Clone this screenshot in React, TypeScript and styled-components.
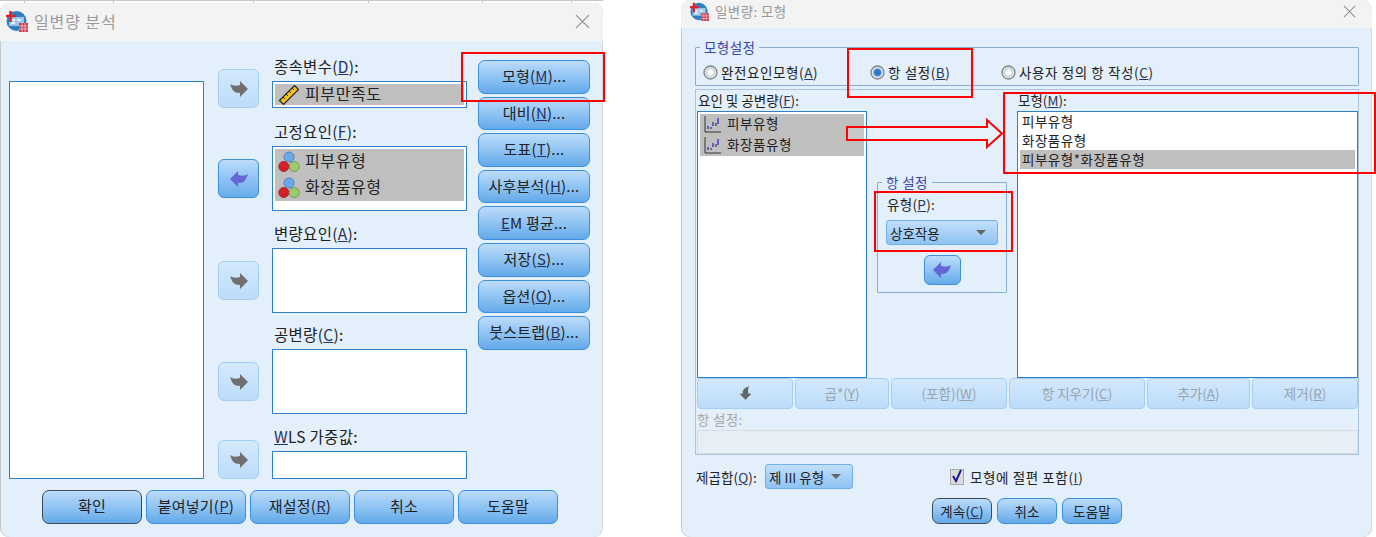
import React from "react";
import styled, { createGlobalStyle } from "styled-components";

const Global = createGlobalStyle`
  html, body { margin: 0; padding: 0; background: #fff; }
  body { font-family: "Noto Sans CJK KR", "Noto Sans", sans-serif; color: #222; }
`;

const Page = styled.div`
  position: relative; width: 1376px; height: 537px; overflow: hidden; background: #fff;
  display: flex; align-items: flex-start;
`;
const LeftStack = styled.div`display: flex; flex-direction: column; width: 603px; margin-right: 78px;`;
const SheetEdge = styled.div`height: 3px; display: flex; border-top: 1px solid #c8c8c8; box-sizing: border-box;`;
const SheetCell = styled.div<{ $w: number }>`width: ${p => p.$w}px; height: 2px; border-right: 1px solid #a9c4dc; box-sizing: border-box;`;

const Dialog = styled.div<{ $h: number; $w: number }>`
  width: ${p => p.$w}px; height: ${p => p.$h}px; box-sizing: border-box; background: #e3effb;
  border-radius: 9px; overflow: hidden; display: flex; flex-direction: column;
  box-shadow: inset 1px 0 0 #c9c9c9, inset -1px 0 0 #d8d8d8;
`;
const TitleBar = styled.div<{ $h: number; $size: number; $pad: number; $lift?: number }>`
  height: ${p => p.$h}px; flex: none; box-sizing: border-box; background: #f3f3f3; display: flex; align-items: center;
  padding: 0 ${p => p.$pad + 7}px ${p => p.$lift ?? 0}px ${p => p.$pad}px; gap: 6px; color: #9b9b9b; font-size: ${p => p.$size}px;
`;
const TitleText = styled.span<{ $track: number }>`flex: 1; letter-spacing: ${p => p.$track}px;`;

const Body1 = styled.div`padding: 16px 13px 0 9px; display: flex; flex-direction: column;`;
const MainRow = styled.div`display: flex; align-items: flex-start;`;
const SourceList = styled.div`
  width: 195px; height: 398px; margin-top: 24px; box-sizing: border-box; background: #fff;
  border: 1.5px solid #2f7fc9; flex: none;
`;
const Targets = styled.div`display: flex; flex-direction: column; width: 249px; margin: 0 11px 0 14px; flex: none;`;
const TargetRow = styled.div<{ $top: number }>`
  display: grid; grid-template-columns: 41px 195px; grid-template-rows: 24px auto; column-gap: 13px;
  margin-top: ${p => p.$top}px;
`;
const FieldLabel = styled.div`grid-column: 2; grid-row: 1; font-size: 15.5px; line-height: 19px; white-space: nowrap; padding-left: 2px; letter-spacing: 0.3px;`;
const Mn = styled.span`color: #28335f; text-decoration: underline; text-underline-offset: 1px;`;
const ArrowSlot = styled.div<{ $small?: boolean }>`
  grid-column: 1; grid-row: ${p => (p.$small ? "1 / 3" : "2")}; align-self: ${p => (p.$small ? "end" : "center")};
`;
const SlotBox = styled.div<{ $h: number }>`
  grid-column: 2; grid-row: 2; height: ${p => p.$h}px; box-sizing: border-box; background: #fff;
  border: 1.5px solid #2f7fc9; padding: 2px; overflow: hidden;
`;
const GreyRows = styled.div`background: #bfbfbf; display: flex; flex-direction: column;`;
const VarRow = styled.div<{ $h: number; $size: number }>`
  height: ${p => p.$h}px; display: flex; align-items: center; gap: 5px; padding-left: 3px; box-sizing: border-box;
  font-size: ${p => p.$size}px; white-space: nowrap; letter-spacing: 0.6px;
`;
const VarName = styled.span`padding-bottom: 4px;`;
const ArrowButton = styled.div<{ $active?: boolean; $w?: number; $h?: number }>`
  width: ${p => p.$w ?? 41}px; height: ${p => p.$h ?? 39}px; box-sizing: border-box; border-radius: 6px;
  display: flex; align-items: center; justify-content: center;
  border: 1.5px solid ${p => (p.$active ? "#3b8fdc" : "#a3cff6")};
  background: ${p => p.$active
    ? "linear-gradient(#bcdcfa, #8fc3f3 50%, #66abea)"
    : "linear-gradient(#d4e9fd, #bcdcfa)"};
`;
const ButtonCol = styled.div`display: flex; flex-direction: column; gap: 3px; width: 112px; margin-top: 3px; flex: none;`;
const Btn = styled.div<{ $h?: number; $default?: boolean; $size?: number }>`
  height: ${p => p.$h ?? 33.6}px; box-sizing: border-box; border-radius: 7px;
  border: 1.5px solid ${p => (p.$default ? "#3c4a5a" : "#3b8fdc")};
  background: linear-gradient(#bcdcfa, #90c4f3 50%, #63a9e9);
  display: flex; align-items: center; justify-content: center; white-space: nowrap;
  font-size: ${p => p.$size ?? 15}px; letter-spacing: 0.2px; padding-bottom: 2px;
`;
const Footer1 = styled.div`display: flex; gap: 4px; margin: 11px 0 0 33px;`;
const FooterBtn = styled(Btn)`width: 100px; padding-bottom: 4px;`;

const Body2 = styled.div`padding: 12px 13px 0 14px; display: flex; flex-direction: column; font-size: 13px;`;
const Group = styled.fieldset`
  margin: 0; padding: 0; box-sizing: border-box; border: 1px solid #88aed4; border-radius: 1px; min-width: 0;
`;
const GroupLegend = styled.legend<{ $shift: number }>`
  margin-left: ${p => p.$shift}px; padding: 0 4px; font-size: 13.5px; line-height: 14px; color: #3c45a8; letter-spacing: 0.4px;
`;
const ModelGroup = styled(Group)`
  height: 46px; display: flex; align-items: center; padding: 8px 0 0 7px;
`;
const Radio = styled.label<{ $w: number }>`
  width: ${p => p.$w}px; flex: none; display: flex; align-items: center; gap: 3px; font-size: 13.5px; white-space: nowrap; letter-spacing: 0.6px;
`;
const Panel = styled.div`
  margin-top: 3px; height: 366px; box-sizing: border-box; border: 1px solid #a8c4e0; display: flex; flex-direction: column; padding: 0 0 0 1px;
`;
const PanelTop = styled.div`display: grid; grid-template-columns: 170px 130px 341px; column-gap: 10px; height: 288px;`;
const ListColumn = styled.div`display: flex; flex-direction: column;`;
const ListLabel = styled.div`height: 21px; line-height: 21px; font-size: 13.5px; white-space: nowrap; padding-left: 1px;`;
const ListBox = styled.div`
  flex: 1; box-sizing: border-box; background: #fff; border: 1.5px solid #2f7fc9; padding: 2px; 
`;
const ModelListBox = styled(ListBox)`padding: 0 2px;`;
const ModelRow = styled.div<{ $sel?: boolean }>`
  height: 19px; line-height: 19px; font-size: 13.5px; padding-left: 2px; letter-spacing: 0.5px;
  background: ${p => (p.$sel ? "#bfbfbf" : "transparent")};
`;
const MidColumn = styled.div`padding-top: 85px;`;
const TermGroup = styled(Group)`height: 118px; padding: 0 8px; display: flex; flex-direction: column;`;
const TermLabel = styled.div`font-size: 13.5px; line-height: 18px; margin: 6px 0 7px 1px; letter-spacing: 0.3px;`;
const Select = styled.div<{ $w: number; $h: number }>`
  width: ${p => p.$w}px; height: ${p => p.$h}px; box-sizing: border-box; border-radius: 3px; border: 1px solid #6fb0ec;
  background: linear-gradient(#c1dffb, #8ec3f3); display: flex; align-items: center; justify-content: space-between;
  padding: 0 11px 0 3px; font-size: 13.5px; white-space: nowrap; flex: none;
`;
const Caret = styled.div`width: 0; height: 0; border-left: 5px solid transparent; border-right: 5px solid transparent; border-top: 5px solid #666;`;
const CenteredArrow = styled.div`display: flex; justify-content: center; margin-top: 10px;`;
const ToolRow = styled.div`
  display: grid; grid-template-columns: 96px 94px 116px 136px 103px 106px; column-gap: 2px; height: 31px;
`;
const ToolBtn = styled.div`
  box-sizing: border-box; border-radius: 4px; border: 1px solid #a3cff6; background: linear-gradient(#d3e8fd, #bcdcfa);
  display: flex; align-items: center; justify-content: center; color: #9aa3ab; font-size: 13.5px; white-space: nowrap; padding-bottom: 2px;
`;
const DimMn = styled.span`text-decoration: underline; text-underline-offset: 1px;`;
const TermCaption = styled.div`height: 21px; line-height: 21px; color: #a8a8a8; font-size: 13.5px; letter-spacing: 0.3px;`;
const TermInput = styled.div`height: 24px; box-sizing: border-box; background: #e8eef5; border: 1px solid #d9dde2;`;
const OptionRow = styled.div`display: flex; align-items: center; margin-top: 9px; font-size: 13.5px; white-space: nowrap;`;
const SumLabel = styled.div`width: 69px; flex: none; margin-left: 1px; letter-spacing: 0.1px;`;
const CheckWrap = styled.div`display: flex; align-items: center; gap: 6px; margin-left: 97px; letter-spacing: 0.6px;`;
const Actions2 = styled.div`display: flex; justify-content: center; gap: 5px; margin-top: 9px;`;
const ActionBtn = styled(Btn)`width: 60px; padding-bottom: 0;`;

const Mark = styled.div<{ $x: number; $y: number; $w: number; $h: number }>`
  position: absolute; left: ${p => p.$x}px; top: ${p => p.$y}px; width: ${p => p.$w}px; height: ${p => p.$h}px;
  box-sizing: border-box; border: 2px solid #f00; pointer-events: none;
`;
const BigArrow = styled.svg`position: absolute; left: 846px; top: 118px; pointer-events: none;`;

const ARROW = "M11 0 L19 8 L11 16 V12 C7 12 5 11 3 8 L1 3 C4 5 7 5 11 4 Z";
const Arrow = ({ dir = "right", color = "#6f6f6f", size = 20 }: { dir?: "right" | "left" | "down"; color?: string; size?: number }) => (
  <svg width={size} height={size * 0.8} viewBox="0 0 20 16"
    style={{ transform: dir === "left" ? "scaleX(-1)" : dir === "down" ? "rotate(90deg)" : undefined }}>
    <path d={ARROW} fill={color} />
  </svg>
);

const AppIcon = ({ size }: { size: number }) => (
  <svg width={size} height={size} viewBox="0 0 22 22">
    <circle cx="10.5" cy="11" r="10" fill="#2f7fc0" />
    <path d="M3 7h15v9H3z" fill="#9cc6e6" />
    <path d="M5 9h4v2H5zM11 9h4v2h-4zM5 12h4v2H5z" fill="#e8f2fa" />
    <path d="M0 6h10M4.5 1v11" stroke="#d8232f" strokeWidth="2.6" />
    <rect x="13" y="13" width="9" height="9" fill="#d23a4a" />
    <path d="M13 16h9M13 19h9M16 13v9M19 13v9" stroke="#f7c9cf" strokeWidth="0.8" />
  </svg>
);
const Close = ({ size }: { size: number }) => (
  <svg width={size} height={size} viewBox="0 0 14 14">
    <path d="M1 1l12 12M13 1L1 13" stroke="#8f8f8f" strokeWidth="1.1" />
  </svg>
);
const Ruler = () => (
  <svg width="22" height="22" viewBox="0 0 22 22">
    <path d="M1.5 16.5L16.5 1.5l4 4L5.5 20.5z" fill="#f6c21c" stroke="#222" strokeWidth="1.2" />
    <path d="M5 13l2 2M8 10l2 2M11 7l2 2M14 4l2 2" stroke="#222" strokeWidth="1" />
  </svg>
);
const Balls = () => (
  <svg width="22" height="22" viewBox="0 0 22 22">
    <circle cx="11" cy="6" r="5" fill="#6ea8e6" stroke="#3d78bd" strokeWidth="0.8" />
    <circle cx="5.8" cy="15.5" r="5" fill="#d5202c" stroke="#9a1620" strokeWidth="0.8" />
    <circle cx="16.2" cy="15.5" r="5" fill="#9ccb6c" stroke="#5f9a3c" strokeWidth="0.8" />
  </svg>
);
const Scale = () => (
  <svg width="19" height="19" viewBox="0 0 19 19">
    <path d="M2 1v16h16" fill="none" stroke="#333" strokeWidth="1" />
    <path d="M5 11v3M10 7v4M15 3v6" stroke="#3535d0" strokeWidth="1.4" />
    <path d="M8 12v2M13 8v3" stroke="#222" strokeWidth="1" />
  </svg>
);
const RadioMark = ({ on }: { on?: boolean }) => (
  <svg width="15" height="15" viewBox="0 0 15 15">
    <circle cx="7.5" cy="7.5" r="6.5" fill="#dfe6ec" stroke="#7d8489" strokeWidth="1.3" />
    <circle cx="7.5" cy="7.5" r="4" fill={on ? "#2b78cc" : "#fff"} stroke={on ? "#8fbde8" : "#b8c2ca"} />
  </svg>
);
const Check = () => (
  <svg width="14" height="17" viewBox="0 0 14 17">
    <rect x="0.5" y="1.5" width="13" height="15" fill="#dcdcdc" stroke="#aaa" />
    <path d="M3 8l3 5 5-11" fill="none" stroke="#1b1b9c" strokeWidth="2" />
  </svg>
);

export default function App() {
  return (
    <Page>
      <Global />
      <LeftStack>
        <SheetEdge>
          {[25, 89, 140, 115, 114, 89].map((w, i) => <SheetCell key={i} $w={w} />)}
        </SheetEdge>
        <Dialog $w={603} $h={534}>
          <TitleBar $h={38} $size={16} $pad={6} $lift={2}>
            <AppIcon size={22} />
            <TitleText $track={0.9}>일변량 분석</TitleText>
            <Close size={15} />
          </TitleBar>
          <Body1>
            <MainRow>
              <SourceList />
              <Targets>
                <TargetRow $top={0}>
                  <FieldLabel>종속변수(<Mn>D</Mn>):</FieldLabel>
                  <ArrowSlot $small><ArrowButton><Arrow /></ArrowButton></ArrowSlot>
                  <SlotBox $h={27}>
                    <GreyRows><VarRow $h={21} $size={16}><Ruler /><VarName>피부만족도</VarName></VarRow></GreyRows>
                  </SlotBox>
                </TargetRow>
                <TargetRow $top={14}>
                  <FieldLabel>고정요인(<Mn>F</Mn>):</FieldLabel>
                  <ArrowSlot><ArrowButton $active><Arrow dir="left" color="#6565d6" /></ArrowButton></ArrowSlot>
                  <SlotBox $h={65}>
                    <GreyRows>
                      <VarRow $h={26} $size={16}><Balls /><VarName>피부유형</VarName></VarRow>
                      <VarRow $h={26} $size={16}><Balls /><VarName>화장품유형</VarName></VarRow>
                    </GreyRows>
                  </SlotBox>
                </TargetRow>
                <TargetRow $top={13}>
                  <FieldLabel>변량요인(<Mn>A</Mn>):</FieldLabel>
                  <ArrowSlot><ArrowButton><Arrow /></ArrowButton></ArrowSlot>
                  <SlotBox $h={65} />
                </TargetRow>
                <TargetRow $top={12}>
                  <FieldLabel>공변량(<Mn>C</Mn>):</FieldLabel>
                  <ArrowSlot><ArrowButton><Arrow /></ArrowButton></ArrowSlot>
                  <SlotBox $h={65} />
                </TargetRow>
                <TargetRow $top={13}>
                  <FieldLabel><Mn>W</Mn>LS 가중값:</FieldLabel>
                  <ArrowSlot $small><ArrowButton><Arrow /></ArrowButton></ArrowSlot>
                  <SlotBox $h={28} />
                </TargetRow>
              </Targets>
              <ButtonCol>
                <Btn>모형(<Mn>M</Mn>)...</Btn>
                <Btn>대비(<Mn>N</Mn>)...</Btn>
                <Btn>도표(<Mn>T</Mn>)...</Btn>
                <Btn>사후분석(<Mn>H</Mn>)...</Btn>
                <Btn><Mn>E</Mn>M 평균...</Btn>
                <Btn>저장(<Mn>S</Mn>)...</Btn>
                <Btn>옵션(<Mn>O</Mn>)...</Btn>
                <Btn>붓스트랩(<Mn>B</Mn>)...</Btn>
              </ButtonCol>
            </MainRow>
            <Footer1>
              <FooterBtn $h={34} $default>확인</FooterBtn>
              <FooterBtn $h={34}>붙여넣기(<Mn>P</Mn>)</FooterBtn>
              <FooterBtn $h={34}>재설정(<Mn>R</Mn>)</FooterBtn>
              <FooterBtn $h={34}>취소</FooterBtn>
              <FooterBtn $h={34}>도움말</FooterBtn>
            </Footer1>
          </Body1>
        </Dialog>
      </LeftStack>

      <Dialog $w={691} $h={537}>
        <TitleBar $h={28} $size={13.5} $pad={9} $lift={6}>
          <AppIcon size={19} />
          <TitleText $track={0.4}>일변량: 모형</TitleText>
          <Close size={13} />
        </TitleBar>
        <Body2>
          <ModelGroup>
            <GroupLegend $shift={-3}>모형설정</GroupLegend>
            <Radio $w={167}><RadioMark /><span>완전요인모형(<Mn>A</Mn>)</span></Radio>
            <Radio $w={131}><RadioMark on /><span>항 설정(<Mn>B</Mn>)</span></Radio>
            <Radio $w={240}><RadioMark /><span>사용자 정의 항 작성(<Mn>C</Mn>)</span></Radio>
          </ModelGroup>
          <Panel>
            <PanelTop>
              <ListColumn>
                <ListLabel>요인 및 공변량(<Mn>F</Mn>):</ListLabel>
                <ListBox>
                  <GreyRows>
                    <VarRow $h={21} $size={13.5}><Scale /><VarName>피부유형</VarName></VarRow>
                    <VarRow $h={21} $size={13.5}><Scale /><VarName>화장품유형</VarName></VarRow>
                  </GreyRows>
                </ListBox>
              </ListColumn>
              <MidColumn>
                <TermGroup>
                  <GroupLegend $shift={-4}>항 설정</GroupLegend>
                  <TermLabel>유형(<Mn>P</Mn>):</TermLabel>
                  <Select $w={112} $h={25}>상호작용<Caret /></Select>
                  <CenteredArrow>
                    <ArrowButton $active $w={37} $h={30}><Arrow dir="left" color="#6565d6" /></ArrowButton>
                  </CenteredArrow>
                </TermGroup>
              </MidColumn>
              <ListColumn>
                <ListLabel>모형(<Mn>M</Mn>):</ListLabel>
                <ModelListBox>
                  <ModelRow>피부유형</ModelRow>
                  <ModelRow>화장품유형</ModelRow>
                  <ModelRow $sel>피부유형*화장품유형</ModelRow>
                </ModelListBox>
              </ListColumn>
            </PanelTop>
            <ToolRow>
              <ToolBtn><Arrow dir="down" color="#666" size={15} /></ToolBtn>
              <ToolBtn>곱*(<DimMn>Y</DimMn>)</ToolBtn>
              <ToolBtn>(포함)(<DimMn>W</DimMn>)</ToolBtn>
              <ToolBtn>항 지우기(<DimMn>C</DimMn>)</ToolBtn>
              <ToolBtn>추가(<DimMn>A</DimMn>)</ToolBtn>
              <ToolBtn>제거(<DimMn>R</DimMn>)</ToolBtn>
            </ToolRow>
            <TermCaption>항 설정:</TermCaption>
            <TermInput />
          </Panel>
          <OptionRow>
            <SumLabel>제곱합(<Mn>Q</Mn>):</SumLabel>
            <Select $w={88} $h={25}>제 III 유형<Caret /></Select>
            <CheckWrap><Check /><span>모형에 절편 포함(<Mn>I</Mn>)</span></CheckWrap>
          </OptionRow>
          <Actions2>
            <ActionBtn $h={26} $size={13.5} $default>계속(<Mn>C</Mn>)</ActionBtn>
            <ActionBtn $h={26} $size={13.5}>취소</ActionBtn>
            <ActionBtn $h={26} $size={13.5}>도움말</ActionBtn>
          </Actions2>
        </Body2>
      </Dialog>

      <Mark $x={461} $y={52} $w={144} $h={50} />
      <Mark $x={847} $y={48} $w={126} $h={50} />
      <Mark $x={1003} $y={92} $w={373} $h={82} />
      <Mark $x={874} $y={191} $w={139} $h={61} />
      <BigArrow width="158" height="32" viewBox="0 0 158 32">
        <path d="M1 9H141V2L156 15.5L141 29V22H1Z" fill="rgba(255,255,255,0.15)" stroke="#f00" strokeWidth="2" />
      </BigArrow>
    </Page>
  );
}
